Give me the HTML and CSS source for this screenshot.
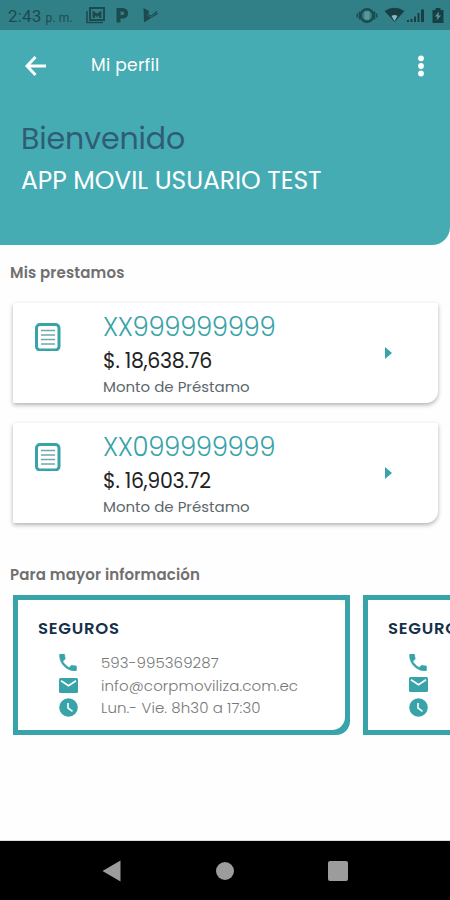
FILE: index.html
```html
<!DOCTYPE html>
<html lang="es">
<head>
    <meta charset="UTF-8">
    <meta name="viewport" content="width=device-width, initial-scale=1.0">
    <title>Mi perfil</title>
    <link rel="stylesheet" href="styles.css">
</head>
<body>

<!-- Iconos reutilizados -->
<svg class="sprite">
    <symbol id="documento" viewBox="0 0 26 28">
        <rect x="1.500" y="1.500" width="22.500" height="25.500" rx="3.500" fill="none" stroke="#38a3a8" stroke-width="3"/>
        <path d="M6 7.500h14M6 12h14M6 16.500h14M6 21h14" stroke="#6fa9ae" stroke-width="1.400"/>
    </symbol>
    <symbol id="telefono" viewBox="3 3 18 18">
        <path d="M6.620 10.790c1.440 2.830 3.760 5.140 6.590 6.590l2.200-2.200c.27-.27.67-.36 1.020-.24 1.120.37 2.330.57 3.570.57.55 0 1 .45 1 1V20c0 .55-.45 1-1 1-9.390 0-17-7.610-17-17 0-.55.45-1 1-1h3.500c.55 0 1 .45 1 1 0 1.250.2 2.450.57 3.570.11.35.03.74-.25 1.020z" stroke="#38a3a8" stroke-width=".5"/>
    </symbol>
    <symbol id="correo" viewBox="0 0 19 15">
        <rect width="19" height="15" rx="1.500"/>
        <path d="M2 2.800l7.500 4.900L17 2.800" fill="none" stroke="#fff" stroke-width="1.700"/>
    </symbol>
    <symbol id="reloj" viewBox="0 0 19 19">
        <circle cx="9.500" cy="9.500" r="9.300"/>
        <path d="M9 5v5l4.500 3.300" fill="none" stroke="#fff" stroke-width="1.600"/>
    </symbol>
</svg>

<div class="pantalla">
    <header class="encabezado">
        <div class="estado">
            <span class="hora">2:43</span><span class="pm">p. m.</span>
            <svg class="estado-izq" width="76" height="18" viewBox="0 0 76 18" fill="#1c4a50">
                <path d="M1 4v11.500H17" fill="none" stroke="#1c4a50" stroke-width="1.600"/>
                <path fill-rule="evenodd" d="M3 0h16v14H3zM5 2v10h12V2z"/>
                <path d="M6.500 11V3.500L11 6.500l4.500-3V11h-2.500V8.500L11 10 9 8.500V11z"/>
                <path fill-rule="evenodd" d="M30.500 1h6.500a5.200 5.200 0 0 1 0 10.400H34.500V15.500h-4zM34.500 4.500v3.500h2a1.750 1.750 0 0 0 0-3.500z"/>
                <path d="M57.500 1l5.500 3-.5 3 2.500 1.500 6-5V6l1.500.5L58 15.500z"/>
                <path d="M61 7.500l3.500 2.800L71 5.500" fill="none" stroke="#328087" stroke-width=".7"/>
            </svg>
            <svg class="estado-der" width="90" height="18" viewBox="0 0 90 18" fill="#173f46">
                <circle cx="13" cy="8.500" r="6.300" fill="none" stroke="#1c4a50" stroke-width="2.600"/>
                <rect x="10.500" y="4.500" width="5" height="8" fill="#5a979d"/>
                <path d="M5.500 4.500v8M3.300 6.500v4M20.500 4.500v8M22.700 6.500v4" stroke="#1c4a50" stroke-width="1.600"/>
                <path d="M30.500 4Q40.500 -2.500 50.500 4L40.500 15z"/>
                <path d="M37.500 9q3-2 6 0l-3 5z" fill="#8eb7c5"/>
                <path d="M53 13h2v2h-2zM56.500 12h2v3h-2zM60 9.500h2V15h-2zM63.500 6h2V15h-2zM67 2.500h3V15h-3z"/>
                <path d="M78.500 3h3V1h5v2h3v13h-11z"/>
                <path d="M85 4.500l-4 5h2.500l-1 4 4.500-5h-2.500z" fill="#5a979d"/>
            </svg>
        </div>

        <div class="barra">
            <svg class="atras" width="21" height="20" viewBox="0 0 21 20">
                <path d="M21 10H2.500M10.500 1L2 10l8.500 9" fill="none" stroke="#fff" stroke-width="2.900"/>
            </svg>
            <span class="titulo">Mi perfil</span>
            <svg class="menu" width="6" height="22" viewBox="0 0 6 22" fill="#fff">
                <circle cx="3" cy="3.300" r="2.900"/>
                <circle cx="3" cy="11" r="2.900"/>
                <circle cx="3" cy="18.500" r="2.900"/>
            </svg>
        </div>

        <h1 class="bienvenido">Bienvenido</h1>
        <p class="usuario">APP MOVIL USUARIO TEST</p>
    </header>

    <main class="contenido">
        <h2 class="seccion seccion-prestamos">Mis prestamos</h2>

        <div class="prestamos">
            <div class="prestamo">
                <svg class="doc"><use href="#documento"/></svg>
                <div class="datos">
                    <div class="numero">XX999999999</div>
                    <div class="monto">$. 18,638.76</div>
                    <div class="detalle">Monto de Préstamo</div>
                </div>
                <svg class="flecha" viewBox="0 0 7 12"><path d="M0 0l7 6-7 6z"/></svg>
            </div>
            <div class="prestamo">
                <svg class="doc"><use href="#documento"/></svg>
                <div class="datos">
                    <div class="numero">XX099999999</div>
                    <div class="monto">$. 16,903.72</div>
                    <div class="detalle">Monto de Préstamo</div>
                </div>
                <svg class="flecha" viewBox="0 0 7 12"><path d="M0 0l7 6-7 6z"/></svg>
            </div>
        </div>

        <h2 class="seccion seccion-info">Para mayor información</h2>

        <div class="carrusel">
            <div class="info">
                <div class="info-cuerpo">
                    <h3>SEGUROS</h3>
                    <div class="fila"><svg class="tel"><use href="#telefono"/></svg><span>593-995369287</span></div>
                    <div class="fila"><svg class="mail"><use href="#correo"/></svg><span>info@corpmoviliza.com.ec</span></div>
                    <div class="fila"><svg class="rel"><use href="#reloj"/></svg><span>Lun.- Vie. 8h30 a 17:30</span></div>
                </div>
            </div>
            <div class="info">
                <div class="info-cuerpo">
                    <h3>SEGUROS</h3>
                    <div class="fila"><svg class="tel"><use href="#telefono"/></svg></div>
                    <div class="fila"><svg class="mail"><use href="#correo"/></svg></div>
                    <div class="fila"><svg class="rel"><use href="#reloj"/></svg></div>
                </div>
            </div>
        </div>
    </main>

    <nav class="navegacion">
        <svg width="19" height="22" viewBox="0 0 19 22"><path d="M0.500 11L18.500 0.500v21z"/></svg>
        <svg width="18" height="18" viewBox="0 0 18 18"><circle cx="9" cy="9" r="9"/></svg>
        <svg width="20" height="20" viewBox="0 0 20 20"><rect width="20" height="20" rx="2"/></svg>
    </nav>
</div>

</body>
</html>
```
FILE: styles.css
```css
* {
    box-sizing: border-box;
}

body {
    margin: 0;
    font-family: Poppins, Inter, "Open Sans", sans-serif;
    background: #fefefe;
}

h1, h2, h3, p {
    margin: 0;
}

svg {
    display: block;
    flex: none;
}

.sprite {
    display: none;
}

.pantalla {
    display: flex;
    flex-direction: column;
    width: 450px;
    height: 900px;
    overflow: hidden;
}

/* Encabezado */
.encabezado {
    height: 245px;
    flex: none;
    background: #46acb4;
    color: #fff;
    border-bottom-right-radius: 18px;
}

.estado {
    display: flex;
    align-items: center;
    height: 30px;
    padding: 2px 6px 0 8px;
    background: #328087;
    color: #1c4a50;
    font-family: Roboto, sans-serif;
}

.hora {
    font-size: 17px;
    letter-spacing: 0.2px;
}

.pm {
    margin: 3px 0 0 4px;
    font-size: 12px;
    letter-spacing: 0.1px;
}

.estado-izq {
    margin-left: 13px;
}

.estado-der {
    margin-left: auto;
}

.barra {
    display: flex;
    align-items: center;
    height: 71px;
    padding: 0 26px 0 25px;
}

.titulo {
    margin: -1px 0 0 45px;
    font-size: 17px;
    line-height: 24px;
    letter-spacing: 0.3px;
}

.menu {
    margin-left: auto;
}

.bienvenido {
    margin: 18px 0 0 21px;
    font-size: 30px;
    line-height: 40px;
    font-weight: 400;
    letter-spacing: -0.1px;
    color: #2f5d74;
}

.usuario {
    margin: 4px 0 0 21px;
    font-size: 25px;
    line-height: 36px;
    letter-spacing: -0.05px;
    white-space: nowrap;
}

/* Contenido */
.contenido {
    flex: none;
    height: 596px;
    border-bottom: 1px solid #ddd;
}

.seccion {
    padding-left: 10px;
    font-size: 15px;
    line-height: 20px;
    font-weight: 600;
    letter-spacing: 0.15px;
    color: #707070;
}

.seccion-prestamos {
    padding-top: 18px;
}

.prestamos {
    display: flex;
    flex-direction: column;
    gap: 20px;
    padding: 20px 12px 0 13px;
}

.prestamo {
    display: flex;
    height: 100px;
    padding: 0 46px 0 22px;
    background: #fff;
    border-bottom-right-radius: 12px;
    box-shadow: 0 2px 4px rgba(0, 0, 0, 0.3);
}

.doc {
    width: 26px;
    height: 28px;
    margin-top: 20px;
}

.datos {
    margin-left: 42px;
    padding-top: 8px;
    white-space: nowrap;
}

.numero {
    font-size: 26px;
    line-height: 32px;
    font-weight: 300;
    letter-spacing: -0.4px;
    color: #38a3a8;
}

.monto {
    font-size: 20.5px;
    line-height: 36px;
    font-weight: 400;
    letter-spacing: -0.3px;
    color: #222;
}

.detalle {
    font-size: 15px;
    line-height: 16px;
    font-weight: 400;
    color: #5c686c;
}

.flecha {
    width: 7px;
    height: 12px;
    margin: 44px 0 0 auto;
    fill: #38a3a8;
}

.seccion-info {
    margin-top: 42px;
}

.carrusel {
    display: flex;
    gap: 13px;
    padding: 10px 0 0 13px;
    overflow: hidden;
}

.info {
    flex: none;
    width: 337px;
    height: 140px;
    padding: 5px;
    border-bottom-right-radius: 14px;
    background: #38a3a8;
}

.info-cuerpo {
    height: 130px;
    padding: 18px 20px 0;
    border-bottom-right-radius: 13px;
    background: #fff;
}

.info h3 {
    margin-bottom: 11px;
    font-size: 16.5px;
    line-height: 22px;
    font-weight: 600;
    letter-spacing: 0.75px;
    color: #14304a;
}

.fila {
    display: grid;
    grid-template-columns: 19px auto;
    column-gap: 23px;
    align-items: center;
    justify-content: start;
    height: 22.5px;
    padding-left: 21px;
    font-size: 15px;
    font-weight: 300;
    letter-spacing: 0.08px;
    color: #777;
    white-space: nowrap;
}

.fila svg {
    fill: #38a3a8;
}

.tel {
    width: 18px;
    height: 17px;
}

.mail {
    width: 19px;
    height: 15px;
}

.rel {
    width: 19px;
    height: 19px;
}

/* Botones del sistema */
.navegacion {
    display: flex;
    flex: 1;
    align-items: center;
    justify-content: space-between;
    padding: 0 102px;
    background: #000;
}

.navegacion svg {
    fill: #9c9c9c;
}
```
